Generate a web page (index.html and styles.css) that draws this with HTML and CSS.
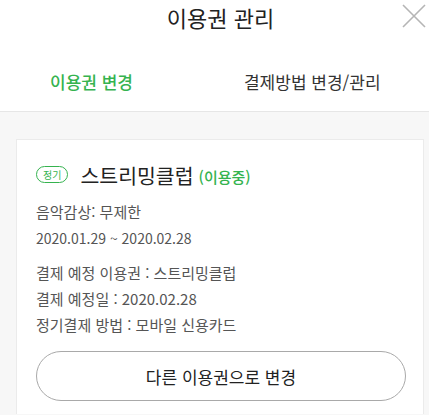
FILE: index.html
```html
<!DOCTYPE html>
<html lang="ko">
<head>
    <meta charset="UTF-8">
    <meta name="viewport" content="width=device-width, initial-scale=1.0">
    <title>이용권 관리</title>
    <link rel="stylesheet" href="styles.css">
</head>
<body>
    <div class="header">
        <h1 class="title">이용권 관리</h1>
        <button class="close-btn" aria-label="닫기">
            <svg width="24" height="24" viewBox="0 0 24 24">
                <path d="M1 1 L23 23 M23 1 L1 23" stroke="#b5b5b5" stroke-width="1.6" fill="none"/>
            </svg>
        </button>
        <div class="tabs">
            <div class="tab active">이용권 변경</div>
            <div class="tab">결제방법 변경/관리</div>
        </div>
    </div>

    <div class="content">
        <div class="card">
            <div class="card-title">
                <span class="badge">정기</span>
                <span class="plan-name">스트리밍클럽</span>
                <span class="plan-status">(이용중)</span>
            </div>
            <p class="line">음악감상: 무제한</p>
            <p class="line date">2020.01.29 ~ 2020.02.28</p>

            <div class="pay-info">
                <p class="line">결제 예정 이용권 : 스트리밍클럽</p>
                <p class="line">결제 예정일 : 2020.02.28</p>
                <p class="line">정기결제 방법 : 모바일 신용카드</p>
            </div>

            <button class="change-btn">다른 이용권으로 변경</button>
        </div>
    </div>
</body>
</html>
```

FILE: styles.css
```css
* {
    margin: 0;
    padding: 0;
    box-sizing: border-box;
    font-family: "Noto Sans CJK KR", "Noto Sans", sans-serif;
}
body {
    width: 429px;
    height: 415px;
    overflow: hidden;
    background: #f7f7f7;
    color: #222;
}
.header {
    position: relative;
    background: #fff;
    border-bottom: 1px solid #e6e6e6;
}
.title {
    height: 34px;
    line-height: 34px;
    font-size: 22px;
    font-weight: 400;
    text-align: center;
    padding-left: 12px;
}
.close-btn {
    position: absolute;
    top: 4px;
    right: 3px;
    width: 24px;
    height: 24px;
    background: none;
    border: none;
}
.tabs {
    display: flex;
    align-items: center;
    gap: 111px;
    height: 60px;
    margin-top: 17px;
    padding-left: 50px;
    font-size: 17px;
}
.tab {
    color: #333;
}
.tab.active {
    color: #35b34f;
    font-weight: 500;
}

/* card */
.content {
    padding: 27px 5px 0 16px;
}
.card {
    background: #fff;
    border: 1px solid #ebebeb;
    border-bottom: none;
    padding: 19px 19px 0 19px;
    height: 275px;
}
.card-title {
    display: flex;
    align-items: center;
    height: 32px;
    margin-bottom: 8px;
}
.badge {
    display: inline-block;
    font-size: 10px;
    line-height: 15px;
    color: #35b34f;
    border: 1.3px solid #35b34f;
    border-radius: 9px;
    padding: 0 6px;
    margin-right: 12px;
    margin-top: -1px;
}
.plan-name {
    font-size: 20.5px;
    margin-right: 5px;
}
.plan-status {
    font-size: 15px;
    color: #35b34f;
    font-weight: 500;
    margin-top: 2px;
}
.line {
    font-size: 15px;
    line-height: 26px;
    color: #555;
}
.line.date {
    font-size: 14px;
}
.pay-info {
    margin-top: 9px;
}
.change-btn {
    display: block;
    width: 370px;
    height: 50px;
    margin-top: 13px;
    background: #fff;
    border: 1px solid #a9a9a9;
    border-radius: 25px;
    font-size: 17px;
    color: #222;
}
```
